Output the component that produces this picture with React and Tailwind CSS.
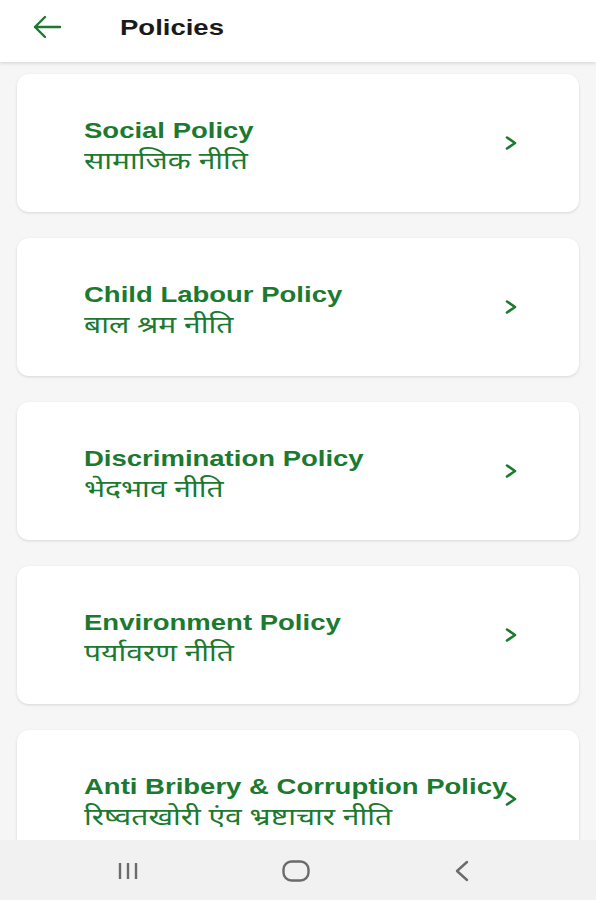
const policies = [
  { en: "Social Policy", hi: "सामाजिक नीति" },
  { en: "Child Labour Policy", hi: "बाल श्रम नीति" },
  { en: "Discrimination Policy", hi: "भेदभाव नीति" },
  { en: "Environment Policy", hi: "पर्यावरण नीति" },
  { en: "Anti Bribery & Corruption Policy", hi: "रिष्वतखोरी एंव भ्रष्टाचार नीति" },
];

// the screen is captured slightly stretched sideways, so text is widened with scale-x
function PolicyCard({ en, hi }) {
  return (
    <div className="flex h-[138px] shrink-0 items-center rounded-[12px] bg-white pl-[67px] pr-[62px] shadow-[0_1px_3px_rgba(0,0,0,0.13)]">
      <div className="mt-[7px] flex-1 min-w-0 origin-left scale-x-125">
        <div className="whitespace-nowrap text-[22px] leading-[26px] font-bold text-[#1b7a2f] [font-family:'Liberation_Sans',Arial,sans-serif]">
          {en}
        </div>
        <div className="mt-[6px] whitespace-nowrap text-[24px] leading-[26px] text-[#1b7a2f] [font-family:'Noto_Sans_Devanagari','Lohit_Devanagari','Noto_Sans',sans-serif]">
          {hi}
        </div>
      </div>
      <svg width="12" height="14" viewBox="0 0 12 14" className="shrink-0 text-[#1b7a2f]">
        <path d="M2 1.5L10 7L2 12.5" fill="none" stroke="currentColor" strokeWidth="2.6" strokeLinecap="round" strokeLinejoin="round" />
      </svg>
    </div>
  );
}

export default function App() {
  return (
    <div className="flex h-[900px] flex-col overflow-hidden bg-[#f6f6f6] [font-family:'Liberation_Sans',Arial,sans-serif]">
      <header className="relative z-10 flex h-[62px] shrink-0 items-center bg-white pb-[8px] shadow-[0_2px_3px_rgba(0,0,0,0.1)]">
        <svg width="30" height="24" viewBox="0 0 30 24" className="ml-[32px] text-[#1b7a2f]">
          <path d="M28 12H3M13 2L3 12l10 10" fill="none" stroke="currentColor" strokeWidth="2.4" strokeLinecap="round" strokeLinejoin="round" />
        </svg>
        <h1 className="ml-[58px] origin-left scale-x-125 text-[22px] font-bold text-[#1a1a1a]">Policies</h1>
      </header>
      <main className="flex flex-1 flex-col gap-[26px] overflow-hidden px-[17px] pt-[12px]">
        {policies.map((p) => (
          <PolicyCard key={p.en} {...p} />
        ))}
      </main>
      <nav className="flex h-[60px] shrink-0 items-center gap-[144px] bg-[#f1f1f1] pl-[118px] pt-[2px]">
        <svg width="20" height="18" viewBox="0 0 20 18" className="text-[#6b6b6b]">
          <path d="M2 1v16M10 1v16M18 1v16" stroke="currentColor" strokeWidth="2.4" />
        </svg>
        <svg width="28" height="22" viewBox="0 0 28 22" className="text-[#6b6b6b]">
          <rect x="1.5" y="1.5" width="25" height="19" rx="8" fill="none" stroke="currentColor" strokeWidth="2.4" />
        </svg>
        <svg width="16" height="22" viewBox="0 0 16 22" className="text-[#6b6b6b]">
          <path d="M13 2L3 11l10 9" fill="none" stroke="currentColor" strokeWidth="2.4" strokeLinecap="round" strokeLinejoin="round" />
        </svg>
      </nav>
    </div>
  );
}
